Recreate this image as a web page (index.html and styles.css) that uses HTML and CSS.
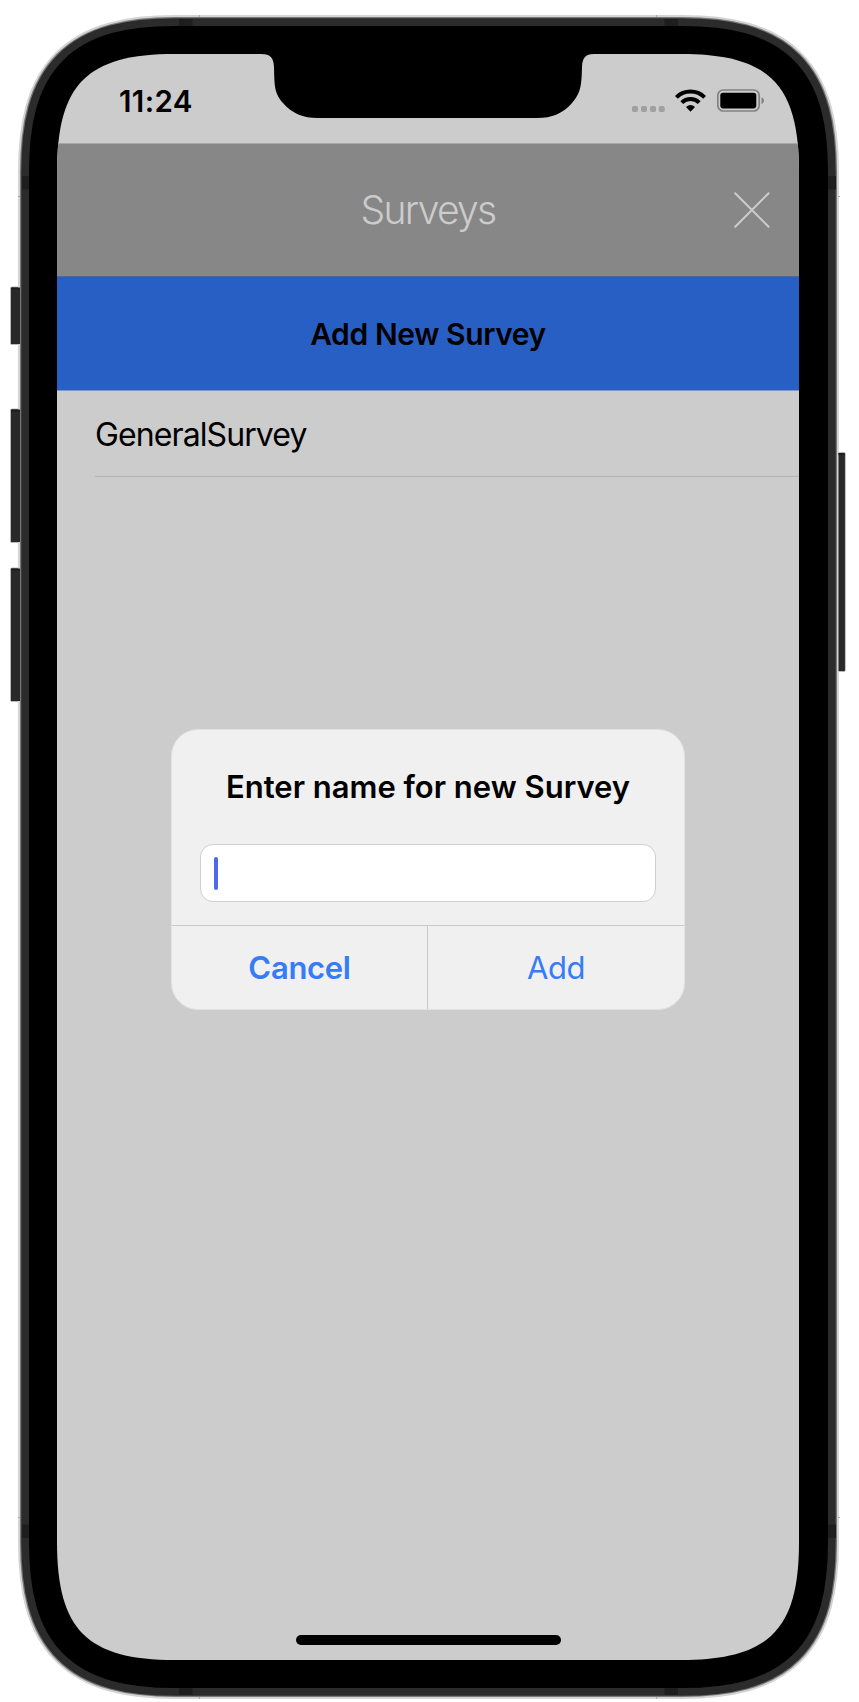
FILE: index.html
```
<!DOCTYPE html>
<html lang="en">
<head>
<meta charset="utf-8">
<title>Surveys</title>
<link rel="stylesheet" href="styles.css">
</head>
<body>
<main class="phone">
  <svg class="frame" viewBox="0 0 859 1702" aria-hidden="true">
    <defs>
      <path id="shell" d="M57 172c0-88 30-118 118-118h507c88 0 118 30 118 118v1370c0 88-30 118-118 118h-507c-88 0-118-30-118-118z"/>
    </defs>
    <g fill="#292929" stroke="#b8b8b8" stroke-width="1">
      <rect x="10.5" y="287" width="14" height="57.5" rx="1.5"/>
      <rect x="10.5" y="409" width="14" height="133.500" rx="1.5"/>
      <rect x="10.5" y="568" width="14" height="133.500" rx="1.5"/>
      <rect x="833" y="452.500" width="12.200" height="219" rx="1.5"/>
    </g>
    <g fill="none">
      <use href="#shell" stroke="#d4d4d4" stroke-width="78"/>
      <use href="#shell" stroke="#777" stroke-width="74"/>
      <use href="#shell" stroke="#2b2b2b" stroke-width="71.500"/>
    </g>
    <g fill="#292929">
      <rect x="11" y="288" width="9" height="56"/>
      <rect x="11" y="410" width="9" height="132"/>
      <rect x="11" y="569" width="9" height="132"/>
      <rect x="838.500" y="453" width="6.200" height="218"/>
    </g>
    <g fill="#1d1d1d">
      <rect x="11" y="287.500" width="9" height="2"/>
      <rect x="11" y="409.500" width="9" height="2"/>
      <rect x="11" y="568.500" width="9" height="2"/>
      <rect x="838.500" y="453" width="6" height="2"/>
    </g>
    <g fill="#1e1e1e">
      <path d="M179 19h13.500v8h-13.500zM664.500 19h13.500v8h-13.500zM179 1687h13.500v8h-13.500zM664.500 1687h13.500v8h-13.500zM22 176h8v13.500h-8zM828 176h8v13.500h-8zM22 1524.500h8v13.500h-8zM828 1524.500h8v13.500h-8z"/>
    </g>
    <path d="M199.500 15v2M656.500 15v2M199.500 1697v2M656.500 1697v2M18 196.500h2M838 196.500h2M18 1517.500h2M838 1517.500h2" stroke="#aaa"/>
    <use href="#shell" fill="#000" stroke="#000" stroke-width="56"/>
  </svg>

  <section class="screen">
    <header class="status">
      <span class="time">11:24</span>
      <svg class="status-icons" viewBox="0 0 134 26" aria-hidden="true">
        <g fill="#a0a0a0">
          <rect x="0" y="18" width="6" height="6" rx="1.8"/><rect x="9" y="18" width="6" height="6" rx="1.8"/><rect x="18" y="18" width="6" height="6" rx="1.8"/><rect x="26.700" y="18" width="6" height="6" rx="1.8"/>
        </g>
        <g fill="none" stroke="#000" stroke-width="4">
          <path d="M44.400 9.400A20 20 0 0 1 72.600 9.400"/>
          <path d="M49.800 14.600A12.300 12.300 0 0 1 67.200 14.600"/>
        </g>
        <path d="M54 18.900Q58.500 15.300 63 18.900L58.500 23.800Z"/>
        <rect x="85.800" y="2" width="41.400" height="21" rx="5.500" fill="none" stroke="#828282" stroke-width="1.700"/>
        <rect x="88.300" y="4.700" width="36" height="15.700" rx="2.800"/>
        <path d="M129.500 9.300Q132 10 132 12.500T129.500 16Z" fill="#828282"/>
      </svg>
    </header>
    <svg class="notch" viewBox="0 0 334 64" aria-hidden="true"><path d="M0 0C10 0 12.500 4 13 13C13.500 33 13.500 39 22 49C31 59.500 42 64 57 64H276C291 64 302 59.500 311 49C319.500 39 320.500 33 321 13C321.500 4 324 0 333 0Z"/></svg>

    <div class="nav">
      <h1 class="title">Surveys</h1>
      <svg class="close" viewBox="0 0 36 36" aria-label="Close"><path d="M1.200 1.200L34.600 34.800M34.600 1.200L1.200 34.800" stroke="#ccc" stroke-width="2" stroke-linecap="round"/></svg>
    </div>
    <div class="add-row"><span class="add-label">Add New Survey</span></div>
    <div class="row"><span class="row-label">GeneralSurvey</span></div>

    <div class="home"></div>

    <div class="dialog">
      <div class="dialog-body">
        <h2 class="dialog-title"><span class="dialog-label">Enter name for new Survey</span></h2>
        <div class="field"><i class="caret"></i></div>
      </div>
      <div class="actions">
        <div class="action cancel"><span>Cancel</span></div>
        <div class="action add"><span>Add</span></div>
      </div>
    </div>
  </section>
</main>
</body>
</html>
```
FILE: styles.css
```
* { box-sizing: border-box; }
body { margin: 0; background: #fff; font-family: Inter, "Liberation Sans", sans-serif; color: #000; }
h1, h2 { margin: 0; }
.phone { position: relative; width: 859px; height: 1702px; padding: 54px 60px 42px 57px; overflow: hidden; }
.frame { position: absolute; left: 0; top: 0; width: 859px; height: 1702px; }
.screen {
  position: relative; width: 742px; height: 1606px; display: flex; flex-direction: column; background: #ccc;
  clip-path: path("M0 118c0-88 30-118 118-118h506c88 0 118 30 118 118v1370c0 88-30 118-118 118h-506c-88 0-118-30-118-118z");
}
.status { display: flex; justify-content: space-between; align-items: flex-start; height: 90px; padding: 29px 33px 0 62px; border-bottom: 1px solid #a6a6a6; flex: none; }
.time { font-size: 29.5px; font-weight: 600; line-height: 36px; letter-spacing: .35px; }
.status-icons { width: 134px; height: 26px; margin-top: 5px; }
.notch { position: absolute; left: 204px; top: 0; width: 334px; height: 64px; }
.nav { display: grid; grid-template-columns: 1fr auto 1fr; align-items: center; height: 132px; padding: 0 29px; background: #878787; flex: none; }
.title { grid-column: 2; font-size: 39px; font-weight: 300; line-height: 48px; letter-spacing: -1.7px; color: #ccc; }
.close { width: 36px; height: 36px; justify-self: end; }
.add-row { display: flex; align-items: center; justify-content: center; height: 115px; background: #285fc5; border-top: 1px solid #47699f; border-bottom: 1px solid #8298c0; flex: none; }
.add-label { font-size: 30px; font-weight: 600; letter-spacing: -.4px; }
.row { display: flex; align-items: center; height: 86px; padding-top: 1px; margin-left: 38px; border-bottom: 1.500px solid #b3b3b3; flex: none; }
.row-label { font-size: 32px; letter-spacing: -.9px; }
.home { width: 265px; height: 10px; margin: auto auto 15px 239px; border-radius: 5px; background: #000; flex: none; }
.dialog { position: absolute; left: 114px; top: 675px; width: 514px; height: 281px; display: flex; flex-direction: column; border-radius: 27px; background: #f0f0f0; border: 1px solid #e2e2e2; overflow: hidden; }
.dialog-body { height: 196px; padding: 37px 28px 0; border-bottom: 1px solid #c8c8c8; flex: none; }
.dialog-title { text-align: center; font-size: 31px; font-weight: 600; line-height: 40px; white-space: nowrap; }
.field { height: 58px; margin-top: 37px; padding: 12px 13px; background: #fff; border: 1px solid #cfcfcf; border-radius: 13px; }
.caret { display: block; width: 4px; height: 33px; border-radius: 2px; background: #4c69ec; }
.actions { display: grid; grid-template-columns: 1fr 1fr; flex: 1; }
.action { display: flex; align-items: center; justify-content: center; color: #357cf6; font-size: 31px; letter-spacing: -.5px; }
.cancel { font-weight: 600; letter-spacing: -.3px; border-right: 1px solid #c8c8c8; }
```
